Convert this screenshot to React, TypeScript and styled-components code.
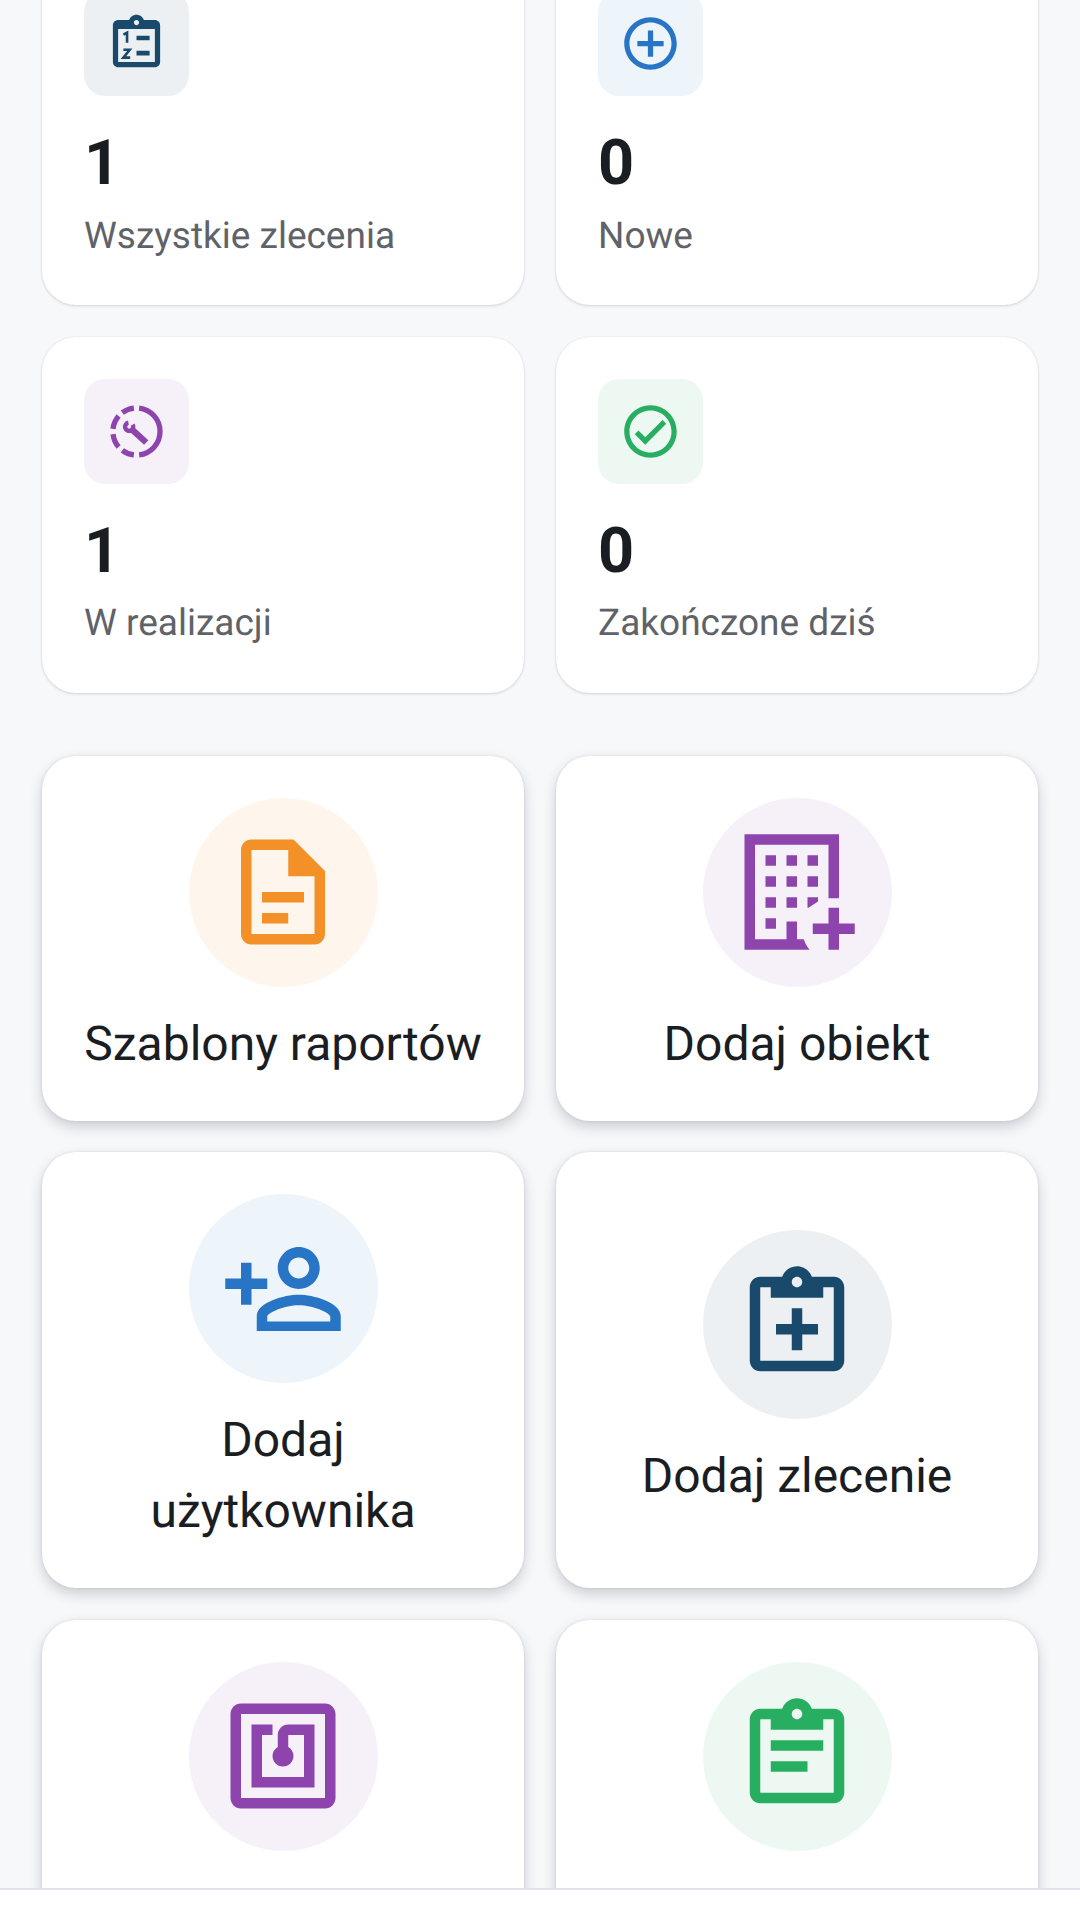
import styled, { createGlobalStyle } from "styled-components";

const NAVY = "#1a4a6b";
const BLUE = "#2775c4";
const PURPLE = "#8e44ad";
const GREEN = "#27ae60";
const ORANGE = "#f39028";

const GlobalStyle = createGlobalStyle`
  html, body {
    margin: 0;
    padding: 0;
    background: #f7f8fa;
    font-family: Roboto, "Liberation Sans", sans-serif;
    text-rendering: geometricPrecision;
  }
`;

const Screen = styled.div`
  width: 1080px;
  height: 1920px;
  display: flex;
  flex-direction: column;
  overflow: hidden;
  background: #f7f8fa;
`;

// visible part of the scrolling list
const ScrollArea = styled.div`
  flex: 1;
  min-height: 0;
  overflow: hidden;
`;

// the list is scrolled down a little in the screenshot
const ScrollContent = styled.div`
  margin-top: -51px;
  padding: 0 42px;
  display: flex;
  flex-direction: column;
  gap: 63px;
`;

const Grid = styled.div`
  display: grid;
  grid-template-columns: 482px 482px;
  column-gap: 32px;
  row-gap: 31.5px;
`;

const StatCardBox = styled.div`
  background: #fff;
  border-radius: 34px;
  padding: 42px;
  display: flex;
  flex-direction: column;
  box-shadow: 0 1px 3px rgba(30, 40, 60, 0.16), 0 0 1px rgba(30, 40, 60, 0.12);
`;

const Tile = styled.div<{ $color: string }>`
  width: 105px;
  height: 105px;
  border-radius: 21px;
  background: ${({ $color }) => $color}15;
  color: ${({ $color }) => $color};
  display: flex;
  align-items: center;
  justify-content: center;
`;

const StatValue = styled.div`
  margin-top: 31px;
  font-size: 63px;
  font-weight: 700;
  line-height: 74px;
  color: #1a1d21;
`;

const StatLabel = styled.div`
  margin-top: 9.5px;
  font-size: 37px;
  line-height: 52.5px;
  color: #5f6368;
`;

const ActionCardBox = styled.div`
  background: #fff;
  border-radius: 34px;
  padding: 42px;
  display: flex;
  flex-direction: column;
  align-items: center;
  justify-content: center;
  box-shadow: 0 6px 14px rgba(30, 40, 60, 0.2), 0 0 3px rgba(30, 40, 60, 0.12);
`;

const Circle = styled.div<{ $color: string }>`
  width: 189px;
  height: 189px;
  flex: none;
  border-radius: 50%;
  background: ${({ $color }) => $color}15;
  color: ${({ $color }) => $color};
  display: flex;
  align-items: center;
  justify-content: center;
`;

const ActionLabel = styled.div`
  margin-top: 21px;
  font-size: 48px;
  line-height: 71px;
  text-align: center;
  color: #1a1d21;
`;

const BottomBar = styled.div`
  height: 32px;
  flex: none;
  background: #fff;
  border-top: 2px solid #dfe2e8;
  box-sizing: border-box;
  position: relative;
  z-index: 1;
`;

const Icon = ({ d, size }: { d: string; size: number }) => (
  <svg width={size} height={size} viewBox="0 0 24 24" fill="currentColor">
    <path d={d} />
  </svg>
);

const CLIPBOARD =
  "M19 3h-4.18C14.4 1.84 13.3 1 12 1s-2.4.84-2.82 2H5c-1.1 0-2 .9-2 2v14c0 1.1.9 2 2 2h14c1.1 0 2-.9 2-2V5c0-1.1-.9-2-2-2zm-7 0c.55 0 1 .45 1 1s-.45 1-1 1-1-.45-1-1 .45-1 1-1zm7 16H5V5h2v2h10V5h2v14z";

const ICON_PLUS_CIRCLE =
  "M13 7h-2v4H7v2h4v4h2v-4h4v-2h-4V7zm-1-5C6.48 2 2 6.48 2 12s4.48 10 10 10 10-4.48 10-10S17.52 2 12 2zm0 18c-4.41 0-8-3.59-8-8s3.59-8 8-8 8 3.59 8 8-3.59 8-8 8z";
const ICON_CHECK_CIRCLE =
  "M12 2C6.48 2 2 6.48 2 12s4.48 10 10 10 10-4.48 10-10S17.52 2 12 2zm0 18c-4.41 0-8-3.59-8-8s3.59-8 8-8 8 3.59 8 8-3.59 8-8 8zm4.59-12.42L10 14.17l-2.59-2.58L6 13l4 4 8-8z";
const ICON_DOC =
  "M14 2H6c-1.1 0-2 .9-2 2v16c0 1.1.89 2 1.99 2H18c1.1 0 2-.9 2-2V8l-6-6zm4 18H6V4h7v5h5v11zM8 12h8v2H8zm0 4h5v2H8z";
const ICON_BUILDING_ADD =
  "M2 1h18v12.2h-2V3H4v18h9.3c.2.7.6 1.4 1.1 2H2zM6 5h2v2H6zm4 0h2v2h-2zm4 0h2v2h-2zM6 9h2v2H6zm4 0h2v2h-2zm4 0h2v2h-2zM6 13h2v2H6zm4 0h2v2h-2zm4 0h2v.8L14.2 15H14zM6 17h2v2H6zm4 .6h2V21h-2zM18 15h2v3h3v2h-3v3h-2v-3h-3v-2h3z";
const ICON_PERSON_ADD =
  "M15 12c2.21 0 4-1.79 4-4s-1.79-4-4-4-4 1.79-4 4 1.79 4 4 4zm0-6c1.1 0 2 .9 2 2s-.9 2-2 2-2-.9-2-2 .9-2 2-2zm0 7.1c-2.67 0-8 1.4-8 4.1V20h16v-2.8c0-2.7-5.33-4.1-8-4.1zm-6 5.1v-1c.22-.72 3.31-2.1 6-2.1 2.7 0 5.8 1.38 6 2.1v1H9zM6 15v-3h3v-2H6V7H4v3H1v2h3v3h2z";
const ICON_NFC =
  "M20 2H4c-1.1 0-2 .9-2 2v16c0 1.1.9 2 2 2h16c1.1 0 2-.9 2-2V4c0-1.1-.9-2-2-2zm0 18H4V4h16v16zM18 6h-5c-1.1 0-2 .9-2 2v2.28c-.6.35-1 .98-1 1.72 0 1.1.9 2 2 2s2-.9 2-2c0-.74-.4-1.38-1-1.72V8h3v8H8V8h2V6H6v12h12V6z";

// clipboard with the numbered list
const NumberedClipboardIcon = () => (
  <svg width={63} height={63} viewBox="0 0 24 24" fill="currentColor">
    <path d="M19 3h-4.18C14.4 1.84 13.3 1 12 1s-2.4.84-2.82 2H5c-1.1 0-2 .9-2 2v14c0 1.1.9 2 2 2h14c1.1 0 2-.9 2-2V5c0-1.1-.9-2-2-2zm-7 0c.55 0 1 .45 1 1s-.45 1-1 1-1-.45-1-1 .45-1 1-1zm7 16H5V6.5h14V19z" />
    <path d="M12 9h5v1.8h-5zm0 5.8h5v1.8h-5z" />
    <path
      d="M7 8.6 8.4 7.9v3.8M7 14.4h2.4L7 17.4h2.6"
      fill="none"
      stroke="currentColor"
      strokeWidth="1"
    />
  </svg>
);

// dashed ring with a wrench inside
const WrenchRingIcon = () => (
  <svg width={63} height={63} viewBox="0 0 24 24" fill="none" stroke="currentColor">
    <path strokeWidth="2" d="M13 3.06A9 9 0 0 1 13 20.94" />
    <path strokeWidth="2" d="M11 3.06A9 9 0 0 0 6.6 4.8" />
    <path strokeWidth="2" d="M5.2 6.1A9 9 0 0 0 3.06 11" />
    <path strokeWidth="2" d="M3.06 13A9 9 0 0 0 5.2 17.9" />
    <path strokeWidth="2" d="M6.6 19.2A9 9 0 0 0 11 20.94" />
    <path strokeWidth="2.4" d="M10 11 15.7 16.2" />
    <path strokeWidth="1.7" d="M10.54 9.42A1.55 1.55 0 1 1 8.93 8.67" />
  </svg>
);

const StatCard = ({
  color,
  icon,
  value,
  label,
}: {
  color: string;
  icon: React.ReactNode;
  value: number;
  label: string;
}) => (
  <StatCardBox>
    <Tile $color={color}>{icon}</Tile>
    <StatValue>{value}</StatValue>
    <StatLabel>{label}</StatLabel>
  </StatCardBox>
);

const ActionCard = ({
  color,
  icon,
  lines,
}: {
  color: string;
  icon: string;
  lines?: string[];
}) => (
  <ActionCardBox>
    <Circle $color={color}>
      <Icon d={icon} size={126} />
    </Circle>
    {/* the labels of the last row are below the fold, keep the line height */}
    <ActionLabel>
      {lines
        ? lines.map((line) => <div key={line}>{line}</div>)
        : "\u00a0"}
    </ActionLabel>
  </ActionCardBox>
);

const App = () => {
  return (
    <Screen>
      <GlobalStyle />
      <ScrollArea>
        <ScrollContent>
          <Grid>
            <StatCard color={NAVY} icon={<NumberedClipboardIcon />} value={1} label="Wszystkie zlecenia" />
            <StatCard color={BLUE} icon={<Icon d={ICON_PLUS_CIRCLE} size={63} />} value={0} label="Nowe" />
            <StatCard color={PURPLE} icon={<WrenchRingIcon />} value={1} label="W realizacji" />
            <StatCard color={GREEN} icon={<Icon d={ICON_CHECK_CIRCLE} size={63} />} value={0} label="Zakończone dziś" />
          </Grid>
          <Grid>
            <ActionCard color={ORANGE} icon={ICON_DOC} lines={["Szablony raportów"]} />
            <ActionCard color={PURPLE} icon={ICON_BUILDING_ADD} lines={["Dodaj obiekt"]} />
            <ActionCard color={BLUE} icon={ICON_PERSON_ADD} lines={["Dodaj", "użytkownika"]} />
            <ActionCard color={NAVY} icon={CLIPBOARD + "M11 9h2v3h3v2h-3v3h-2v-3H8v-2h3z"} lines={["Dodaj zlecenie"]} />
            <ActionCard color={PURPLE} icon={ICON_NFC} />
            <ActionCard color={GREEN} icon={CLIPBOARD + "M7 9h10v2H7zm0 4h7v2H7z"} />
          </Grid>
        </ScrollContent>
      </ScrollArea>
      <BottomBar />
    </Screen>
  );
};

export default App;
